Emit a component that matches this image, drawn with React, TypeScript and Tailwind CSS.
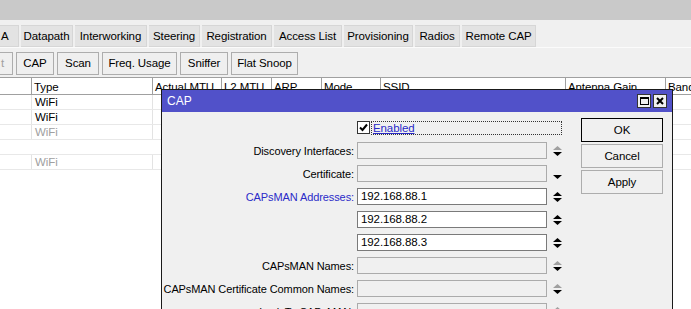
import React from "react";

const F = "font-['Liberation_Sans',Arial,sans-serif]";

function UpDown({ up = "black", down = true, upShow = true }: { up?: string; down?: boolean; upShow?: boolean }) {
  return (
    <svg width="9" height="12" viewBox="0 0 9 12" className="shrink-0">
      {upShow && <polygon points="0,5 4.5,1 9,5" fill={up} />}
      {down && <polygon points="0,7 4.5,11 9,7" fill="black" />}
    </svg>
  );
}

type Row = { label?: string; blue?: boolean; value?: string; enabled?: boolean; upColor?: string; onlyDown?: boolean };

const rows: Row[] = [
  { label: "Discovery Interfaces:", upColor: "#a0a0a0" },
  { label: "Certificate:", onlyDown: true },
  { label: "CAPsMAN Addresses:", blue: true, value: "192.168.88.1", enabled: true },
  { value: "192.168.88.2", enabled: true },
  { value: "192.168.88.3", enabled: true },
  { label: "CAPsMAN Names:", upColor: "#a0a0a0" },
  { label: "CAPsMAN Certificate Common Names:", upColor: "#a0a0a0" },
  { label: "Lock To CAPsMAN:", upColor: "#a0a0a0" },
];

const tabs = ["A", "Datapath", "Interworking", "Steering", "Registration", "Access List", "Provisioning", "Radios", "Remote CAP"];
const tabW = [19, 52, 72, 51, 70, 68, 69, 45, 74];
const tools = [
  { t: "t", w: 13, dis: true },
  { t: "CAP", w: 38 },
  { t: "Scan", w: 42 },
  { t: "Freq. Usage", w: 75 },
  { t: "Sniffer", w: 48 },
  { t: "Flat Snoop", w: 67 },
];
const cols = [
  { t: "", w: 32 },
  { t: "Type", w: 121 },
  { t: "Actual MTU", w: 69 },
  { t: "L2 MTU", w: 50 },
  { t: "ARP", w: 50 },
  { t: "Mode", w: 59 },
  { t: "SSID", w: 185 },
  { t: "Antenna Gain", w: 100 },
  { t: "Band", w: 60 },
];
const data: { v: string; c: string; sep: boolean }[] = [
  { v: "WiFi", c: "text-black", sep: true },
  { v: "WiFi", c: "text-black", sep: true },
  { v: "WiFi", c: "text-[#a0a0a0]", sep: true },
  { v: "", c: "", sep: false },
  { v: "WiFi", c: "text-[#a0a0a0]", sep: true },
];

export default function App() {
  return (
    <div className={`relative w-[691px] h-[309px] overflow-hidden bg-[#f0f0f0] text-[11px] tracking-[-0.1px] leading-[14px] text-black ${F}`}>
      <div className="h-[20px] bg-[#c9c9c9]" />
      <div className="h-[5px]" />
      {/* tabs */}
      <div className="flex h-[22px] gap-[2px] text-[11.5px]">
        {tabs.map((t, i) => (
          <div
            key={t}
            style={{ width: tabW[i] }}
            className={`flex items-center ${i === 0 ? "justify-start pl-[1px]" : "justify-center"} bg-[#e3e3e3] border border-[#d6d6d6] border-l-0 shrink-0 overflow-hidden`}
          >
            {t}
          </div>
        ))}
      </div>
      {/* toolbar */}
      <div className="h-[30px] flex items-center gap-[3px] border-t border-[#fbfbfb] pt-[1px] text-[11.5px]">
        {tools.map((b, i) => (
          <div
            key={i}
            style={{ width: b.w }}
            className={`h-[23px] flex items-center ${b.dis ? "justify-start pl-[1px] text-[#a0a0a0] border-l-0" : "justify-center"} bg-[#efefef] border border-[#adadad] shrink-0`}
          >
            {b.t}
          </div>
        ))}
      </div>
      {/* table */}
      <div className="bg-white border-t border-[#a0a0a0] h-[300px] text-[11.5px]">
        <div className="flex h-[17px] border-b border-[#a0a0a0]">
          {cols.map((c, i) => (
            <div key={i} style={{ width: c.w }} className="shrink-0 border-r border-[#a0a0a0] pl-[2px] pt-[2px] whitespace-nowrap overflow-hidden">
              {c.t}
            </div>
          ))}
        </div>
        {data.map((r, ri) => (
          <div key={ri} className="flex h-[15px] border-b border-[#e8e8e8]">
            {cols.map((c, i) => (
              <div
                key={i}
                style={{ width: c.w }}
                className={`shrink-0 ${r.sep && i < 2 ? "border-r border-[#e3e3e3]" : ""} pl-[3px] ${r.c}`}
              >
                {i === 1 ? r.v : ""}
              </div>
            ))}
          </div>
        ))}
      </div>

      {/* dialog window */}
      <div className="absolute left-[161px] top-[89px] w-[512px] h-[240px] border border-[#1a1a1a] bg-[#f0f0f0] flex flex-col">
        <div className="h-[22px] bg-[#5151c9] flex items-center justify-between pl-[5px] pr-[5px] text-white shrink-0">
          <span className="text-[12px] tracking-normal">CAP</span>
          <div className="flex gap-[2px]">
            <div className="w-[14px] h-[14px] bg-[#f0f0f0] border border-[#333] flex items-center justify-center">
              <div className="w-[9px] h-[8px] border border-black border-t-2" />
            </div>
            <div className="w-[14px] h-[14px] bg-[#f0f0f0] border border-[#333] flex items-center justify-center">
              <svg width="8" height="8" viewBox="0 0 8 8">
                <path d="M1 1 L7 7 M7 1 L1 7" stroke="black" strokeWidth="2" />
              </svg>
            </div>
          </div>
        </div>
        <div className="flex">
          <div className="flex flex-col gap-[6px] pt-[7px] w-[410px]">
            <div className="flex h-[17px] items-center">
              <div className="w-[195px] shrink-0" />
              <div className="w-[13px] h-[13px] bg-white border border-[#333] flex items-center justify-center shrink-0">
                <svg width="9" height="9" viewBox="0 0 9 9">
                  <path d="M1 4.5 L3.5 7 L8 1.5" stroke="black" strokeWidth="2" fill="none" />
                </svg>
              </div>
              <div className="ml-[1px] w-[191px] h-[14px] border border-dotted border-[#333] text-[#2828c8] underline underline-offset-1 leading-[12px] pl-[1px] text-[11.5px]">
                Enabled
              </div>
            </div>
            {rows.map((r, i) => (
              <div key={i} className="flex h-[17px] items-center">
                <div className={`w-[192px] shrink-0 text-right whitespace-nowrap ${r.blue ? "text-[#2b2bc8]" : "text-black"}`}>
                  {r.label ?? ""}
                </div>
                <div
                  className={`ml-[3px] w-[190px] h-[17px] shrink-0 border ${r.enabled ? "bg-white border-[#7a7a7a]" : "bg-[#f0f0f0] border-[#ababab]"} pl-[3px] leading-[15px] text-[11.5px]`}
                >
                  {r.value ?? ""}
                </div>
                <div className="ml-[6px] flex items-center">
                  {r.onlyDown ? <UpDown upShow={false} /> : <UpDown up={r.upColor ?? "black"} />}
                </div>
              </div>
            ))}
          </div>
          <div className="flex flex-col gap-[2px] pt-[6px] ml-[9px] text-[11.5px]">
            <div className="w-[82px] h-[24px] border border-black bg-[#f0f0f0] flex items-center justify-center">OK</div>
            <div className="w-[82px] h-[24px] border border-[#adadad] bg-[#f0f0f0] flex items-center justify-center">Cancel</div>
            <div className="w-[82px] h-[24px] border border-[#adadad] bg-[#f0f0f0] flex items-center justify-center">Apply</div>
          </div>
        </div>
      </div>
    </div>
  );
}
